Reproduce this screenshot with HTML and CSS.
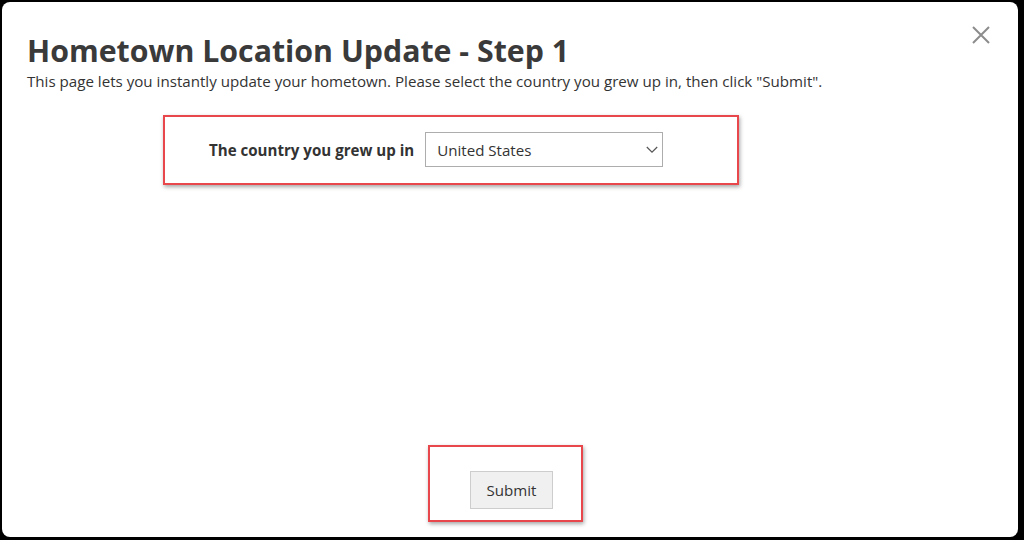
FILE: index.html
```html
<!DOCTYPE html>
<html lang="en">
<head>
    <meta charset="UTF-8">
    <meta name="viewport" content="width=device-width, initial-scale=1.0">
    <title>Hometown Location Update</title>
    <link rel="stylesheet" href="styles.css">
</head>
<body>
    <div class="panel">
        <button class="close" aria-label="Close">
            <svg width="20" height="20" viewBox="0 0 20 20">
                <path d="M2 2 L18 18 M18 2 L2 18" stroke="#8c8c8c" stroke-width="2" fill="none"/>
            </svg>
        </button>
        <div class="header">
            <h1>Hometown Location Update - Step 1</h1>
            <p>This page lets you instantly update your hometown. Please select the country you grew up in, then click "Submit".</p>
        </div>
        <div class="field">
            <label for="country">The country you grew up in</label>
            <div class="select">
                <span>United States</span>
                <svg width="12" height="8" viewBox="0 0 12 8">
                    <path d="M0.8 1 L6 6.2 L11.2 1" stroke="#555" stroke-width="1.2" fill="none"/>
                </svg>
            </div>
        </div>
        <div class="actions">
            <button class="submit">Submit</button>
        </div>
        <div class="mark mark-field"></div>
        <div class="mark mark-submit"></div>
    </div>
</body>
</html>
```

FILE: styles.css
```css
html, body {
    margin: 0;
    height: 100%;
}
body {
    background: #000;
    font-family: "Open Sans", sans-serif;
    color: #333;
    padding: 2px 6px 3px 2px;
    box-sizing: border-box;
}
.panel {
    position: relative;
    background: #fff;
    border-radius: 8px;
    height: 535px;
    display: flex;
    flex-direction: column;
}
.header {
    padding: 29px 25px 0;
}
.header h1 {
    margin: 0;
    font-size: 30.3px;
    font-weight: 700;
    line-height: 40px;
    color: #3a3a3a;
}
.header p {
    margin: 0;
    font-size: 15.13px;
    line-height: 20px;
    color: #333;
}
.close {
    position: absolute;
    top: 23px;
    right: 27px;
    border: none;
    background: none;
    padding: 0;
    cursor: pointer;
}
.field {
    display: flex;
    align-items: center;
    margin-top: 41px;
    padding-left: 207px;
}
.field label {
    font-size: 15.1px;
    font-weight: 700;
    color: #333;
    margin-right: 11px;
}
.select {
    display: flex;
    align-items: center;
    justify-content: space-between;
    box-sizing: border-box;
    width: 238px;
    height: 35px;
    padding: 0 4px 0 11px;
    border: 1px solid #adadad;
    font-size: 15.1px;
    color: #333;
}
.actions {
    margin-top: auto;
    margin-bottom: 28px;
    display: flex;
    justify-content: center;
}
.submit {
    font-family: "Open Sans", sans-serif;
    font-size: 15.1px;
    color: #333;
    background: #f0f0f0;
    border: 1px solid #cdcdcd;
    box-sizing: border-box;
    width: 83px;
    height: 38px;
    padding: 0;
    margin-left: 3px;
}
.mark {
    position: absolute;
    border: 2px solid #e8474b;
    box-shadow: 1px 2px 4px rgba(0, 0, 0, 0.35);
}
.mark-field {
    left: 161px;
    top: 113px;
    width: 572px;
    height: 66px;
}
.mark-submit {
    left: 426px;
    top: 443px;
    width: 151px;
    height: 73px;
}
```
